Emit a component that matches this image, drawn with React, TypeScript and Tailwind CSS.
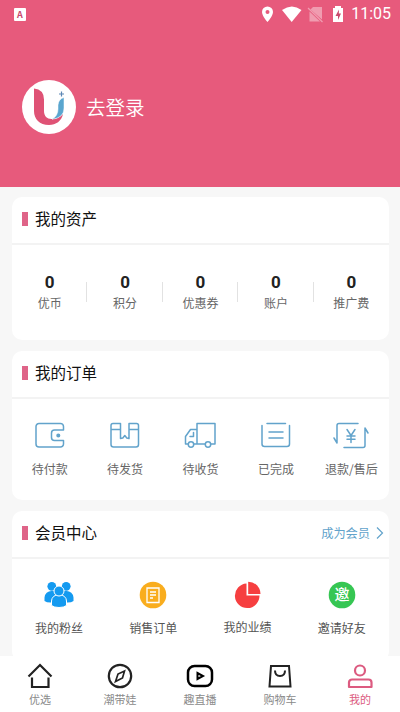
import type { ReactNode } from 'react';

const assets = ['优币', '积分', '优惠券', '账户', '推广费'];

const lineIcon = {
  fill: 'none',
  stroke: '#62a3cb',
  strokeWidth: 1.5,
  strokeLinecap: 'round',
  strokeLinejoin: 'round',
} as const;

const orders: { label: string; icon: ReactNode }[] = [
  {
    label: '待付款',
    icon: (
      <>
        <path d="M32.500 11V7.500a3 3 0 0 0-3-3H8a3 3 0 0 0-3 3V25a3 3 0 0 0 3 3h21.500a3 3 0 0 0 3-3v-3.500H23.500a3 3 0 0 1-3-3V14a3 3 0 0 1 3-3z" />
        <circle cx="27.300" cy="16.500" r="1.300" fill="#62a3cb" />
      </>
    ),
  },
  {
    label: '待发货',
    icon: (
      <path d="M5 10.500V6.500a2 2 0 0 1 2-2h7.500v15l2.300-.5 2-2.500 2 2.500 2.200.5v-15h7.500a2 2 0 0 1 2 2v4M5 10.500V25.500A2.500 2.500 0 0 0 7.500 28H30a2.500 2.500 0 0 0 2.500-2.500v-15M5 10.500h9.500M23 10.500h9.500" />
    ),
  },
  {
    label: '待收货',
    icon: (
      <>
        <path d="M16 24.500V4.500h18V25h-4M24 25H12.800M16 10.500H9.500L4.500 17.500V25h2.700M12.500 13.500v4H9" />
        <circle cx="10" cy="25.500" r="2.700" />
        <circle cx="27" cy="25.500" r="2.700" />
      </>
    ),
  },
  {
    label: '已完成',
    icon: <path d="M10 4.500h18.500M5 6.500V25a2.500 2.500 0 0 0 2.500 2.500h22.500A2.500 2.500 0 0 0 32.500 25V6.500M12 13h14M12 19h14" />,
  },
  {
    label: '退款/售后',
    icon: (
      <path d="M26 4.500H7a2 2 0 0 0-2 2V24L2 19M12 28.500h19a2 2 0 0 0 2-2V9l3 5M15 10.500l4 6 4-6M19 16.500V23.500M15 17h8M15 20.300h8" />
    ),
  },
];

const members: { label: string; icon: ReactNode; raised?: boolean }[] = [
  {
    label: '我的粉丝',
    icon: (
      <g fill="#149af0">
        <circle cx="7.800" cy="6.300" r="4.400" />
        <circle cx="22.200" cy="6.300" r="4.400" />
        <path d="M.500 21v-3.500a7 7 0 0 1 7-6.500h15a7 7 0 0 1 7 6.500v3.500q-2 1.500-6 1.500H6.500q-4 0-6-1.500z" />
        <g stroke="#fff" strokeWidth="1">
          <path d="M7.500 25.500v-4.500a7.500 6.500 0 0 1 15 0v4.500q-2.500 2-7.500 2t-7.500-2z" />
          <circle cx="15" cy="11" r="5" />
        </g>
      </g>
    ),
  },
  {
    label: '销售订单',
    icon: (
      <>
        <circle cx="15" cy="15" r="13.300" fill="#f9ad1e" />
        <path d="M9 8h12v14.500H9zM12 12h6M12 15h6M12 18h3" fill="none" stroke="#fff" strokeWidth="1.300" />
      </>
    ),
  },
  {
    label: '我的业绩',
    raised: true,
    icon: (
      <g fill="#f63f40">
        <path d="M13.500 3.500V15.500H26.500A12.300 12.300 0 1 1 13.500 3.500z" />
        <path d="M15.200 1.700A12.300 12.300 0 0 1 27.500 14H15.200z" />
      </g>
    ),
  },
  {
    label: '邀请好友',
    icon: (
      <>
        <circle cx="15" cy="15" r="13.300" fill="#36c653" />
        <text x="15" y="20.300" textAnchor="middle" fontSize="15" fontWeight="500" fill="#fff">邀</text>
      </>
    ),
  },
];

const tabs: { label: string; icon: ReactNode; active?: boolean }[] = [
  { label: '优选', icon: <path d="M2.500 14.500 14 3 25.500 14.500M6 15.500V25H22.500V15.500" /> },
  {
    label: '潮带娃',
    icon: (
      <>
        <circle cx="14" cy="14" r="11.200" />
        <path d="M18.500 9 16.500 16l-7 3.500L12 12z" strokeWidth="1.700" />
      </>
    ),
  },
  {
    label: '趣直播',
    icon: (
      <g stroke="#000" strokeWidth="2.500">
        <rect x="2" y="4" width="24" height="20" rx="6.500" />
        <path d="M11.500 11v6l5.500-3z" strokeWidth="2" />
      </g>
    ),
  },
  { label: '购物车', icon: <path d="M5 4h18l1.500 20.500h-21zM9 8.500q0 5.500 5 5.500t5-5.500" strokeWidth="2" /> },
  {
    label: '我的',
    active: true,
    icon: (
      <>
        <circle cx="14" cy="8.500" r="5" />
        <path d="M3 25v-4.500a3 3 0 0 1 3-3h16.500a3 3 0 0 1 3 3V25z" strokeLinejoin="round" />
      </>
    ),
  },
];

function CardHeader({ title, children }: { title: string; children?: ReactNode }) {
  return (
    <div className="flex h-12 items-center border-b-2 border-[#f3f3f3] pb-0.5 pl-2.5 pr-[5px]">
      <span className="mr-[7px] h-3.5 w-1.5 bg-[#df6488]" />
      <h2 className="-mt-[3px] text-[15.500px] leading-5 text-[#111]">{title}</h2>
      {children}
    </div>
  );
}

function StatusBar() {
  return (
    <div className="flex h-7 items-center pl-3.5 pr-[9px] text-white">
      <svg width="12" height="13" viewBox="0 0 12 13">
        <rect width="12" height="13" rx="1" fill="#fff" />
        <text x="6" y="9.500" textAnchor="middle" fontSize="9" fontWeight="700" fill="#c94a6d">A</text>
      </svg>
      <svg className="ml-auto" width="84" height="18" viewBox="0 0 84 18" fill="#fff">
        <path fillRule="evenodd" d="M8.500 1.500a5.500 5.500 0 0 0-5.500 5.500c0 4 5.500 10 5.500 10s5.500-6 5.500-10a5.500 5.500 0 0 0-5.500-5.500zm0 3.500a2 2 0 1 1 0 4 2 2 0 0 1 0-4z" />
        <path d="M23 5q10-7 19.500 0L32.700 17z" />
        <g opacity=".4">
          <path d="M54 2h9v12.500L51.500 4.500z" />
          <path d="M50.500 6.500v10H61z" />
          <path d="m49 3 14.500 14" stroke="#fff" strokeWidth="1.300" />
        </g>
        <path d="M76 1h6v2h2v14H74V3h2z" />
        <path d="M80 4.500 76.500 11H79v4l3-6.500h-2.200z" fill="#c94a6d" />
      </svg>
      <span className="ml-2 font-['Roboto'] text-base">11:05</span>
    </div>
  );
}

export default function App() {
  return (
    <main className="flex h-[712px] w-[400px] flex-col overflow-hidden bg-[#f7f7f7] font-['Noto_Sans_CJK_SC',sans-serif]">
      <header className="h-[187px] shrink-0 bg-[#e75a7c]">
        <StatusBar />
        <div className="mt-[52px] flex items-center pl-[22px]">
          <svg width="54" height="54" viewBox="0 0 54 54">
            <circle cx="27" cy="27" r="27" fill="#fff" />
            <path d="M12 8.500q10 1 10 11V31c0 5 3 8 7.500 8q6.500.500 11.500-5c-1.500 7-7 11-14 11-9.500 0-15-6-15-14z" fill="#df5275" />
            <path d="M36 25q.500-6 6-7.500V28q0 10-12 11.300 6-3.300 6-10.300z" fill="#5aa6cf" stroke="#fff" strokeWidth=".5" />
            <path d="M39.500 11.500v5M37 14h5" stroke="#5b86b4" strokeWidth="1.200" />
          </svg>
          <span className="ml-2.5 text-[19.500px] font-[350] text-white">去登录</span>
        </div>
      </header>

      <div className="flex min-h-0 flex-1 flex-col overflow-hidden pl-3 pr-[11px] pt-2.5">
        {/* 资产 */}
        <section className="h-[143px] shrink-0 rounded-[10px] bg-white">
          <CardHeader title="我的资产" />
          <div className="grid grid-cols-5 pt-[27px]">
            {assets.map((label, i) => (
              <div key={label} className="relative flex flex-col items-center">
                <b className="font-['Roboto'] text-[17px] leading-5 text-[#222]">0</b>
                <span className="mt-0.5 text-xs leading-[18px] text-[#666]">{label}</span>
                {i < 4 && <i className="absolute right-0 top-2.5 h-5 w-px bg-[#e2e2e2]" />}
              </div>
            ))}
          </div>
        </section>

        {/* 订单 */}
        <section className="mt-[11px] h-[149px] shrink-0 rounded-[10px] bg-white">
          <CardHeader title="我的订单" />
          <div className="grid grid-cols-5 pt-5">
            {orders.map((o) => (
              <div key={o.label} className="flex flex-col items-center">
                <svg width="38" height="32" viewBox="0 0 38 32" {...lineIcon}>
                  {o.icon}
                </svg>
                <span className="mt-[9px] whitespace-nowrap text-xs leading-[18px] text-[#666]">{o.label}</span>
              </div>
            ))}
          </div>
        </section>

        {/* 会员 */}
        <section className="mt-[11px] h-[150px] shrink-0 rounded-[10px] bg-white">
          <CardHeader title="会员中心">
            <a className="ml-auto flex items-center text-[12.200px] leading-5 text-[#62a3cb]">
              成为会员
              <svg className="ml-1.5" width="8" height="14" viewBox="0 0 8 14" fill="none" stroke="#62a3cb" strokeWidth="1.200">
                <path d="m1 1.500 5.500 5.500L1 12.500" />
              </svg>
            </a>
          </CardHeader>
          <div className="grid grid-cols-4 pt-[21px]">
            {members.map((m) => (
              <div key={m.label} className="flex flex-col items-center">
                <svg width="30" height="30" viewBox="0 0 30 30">
                  {m.icon}
                </svg>
                <span className={`${m.raised ? 'mt-2' : 'mt-[9px]'} text-xs leading-[18px] text-[#555]`}>{m.label}</span>
              </div>
            ))}
          </div>
        </section>
      </div>

      <nav className="grid h-14 shrink-0 grid-cols-5 bg-white pt-1.5">
        {tabs.map((t) => (
          <div key={t.label} className={`flex flex-col items-center ${t.active ? 'text-[#dc5b80]' : 'text-[#8a8a8a]'}`}>
            <svg width="28" height="28" viewBox="0 0 28 28" fill="none" stroke={t.active ? '#dc5b80' : '#222'} strokeWidth="2.200">
              {t.icon}
            </svg>
            <span className="mt-px text-[11px] leading-4">{t.label}</span>
          </div>
        ))}
      </nav>
    </main>
  );
}
